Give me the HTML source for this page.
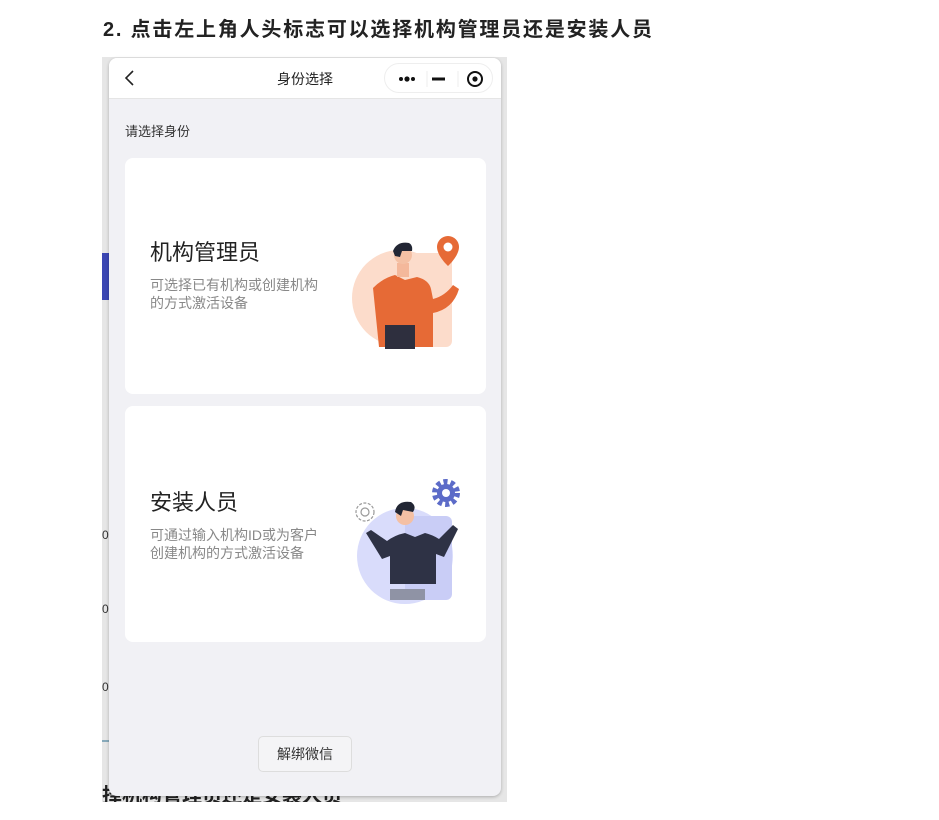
<!DOCTYPE html>
<html><head><meta charset="utf-8"><style>
*{margin:0;padding:0;box-sizing:border-box}
body{width:939px;height:820px;background:#fff;position:relative;overflow:hidden;font-family:"Liberation Sans","Noto Sans CJK SC",sans-serif}
.abs{position:absolute}
h2{position:absolute;left:103px;top:13px;font-size:20px;font-weight:bold;color:#222;letter-spacing:1.8px}
.under{left:102px;top:57px;width:405px;height:745px;background:#e6e6e6}
.phone{left:109px;top:58px;width:392px;height:738px;background:#f1f1f5;border-radius:8px;overflow:hidden;box-shadow:0 1px 3px rgba(0,0,0,.25)}
.nav{position:absolute;left:0;top:0;width:392px;height:41px;background:#fff;border-bottom:1px solid #e5e5e5}
.card{position:absolute;left:16px;width:361px;height:236px;background:#fff;border-radius:8px}
.t{position:absolute;left:25px;font-size:22px;color:#222}
.d{position:absolute;left:25px;font-size:14px;color:#888;line-height:18px}
</style></head><body>
<h2>2. 点击左上角人头标志可以选择机构管理员还是安装人员</h2>
<div class="abs under"></div>
<div class="abs" style="left:102px;top:253px;width:7px;height:47px;background:#3b46b3"></div>
<div class="abs" style="left:102px;top:740px;width:7px;height:2px;background:#8ab"></div>
<div class="abs" style="left:102px;top:528px;font-size:12px;color:#333">0</div>
<div class="abs" style="left:102px;top:602px;font-size:12px;color:#333">0</div>
<div class="abs" style="left:102px;top:680px;font-size:12px;color:#333">0</div>
<div class="abs" style="left:102px;top:783px;font-size:20px;font-weight:bold;color:#222;height:19px;overflow:hidden;line-height:26px">择机构管理员还是安装人员</div>
<div class="abs phone">
 <div class="nav">
  <svg class="abs" style="left:14px;top:11px" width="12" height="18"><path d="M10 2L3 9l7 7" stroke="#222" stroke-width="1.6" fill="none"/></svg>
  <div class="abs" style="left:0;width:392px;top:11px;text-align:center;font-size:14px;color:#222">身份选择</div>
  <div class="abs" style="left:275px;top:5px;width:109px;height:30px;border:1px solid #eee;border-radius:15px;background:#fff">
   <svg width="109" height="30"><circle cx="16" cy="15" r="2" fill="#111"/><circle cx="22" cy="15" r="2.6" fill="#111"/><circle cx="28" cy="15" r="2" fill="#111"/><line x1="42" y1="7" x2="42" y2="23" stroke="#eee"/><rect x="47" y="13.5" width="13" height="3" fill="#111"/><line x1="73" y1="7" x2="73" y2="23" stroke="#eee"/><circle cx="90" cy="15" r="7" stroke="#111" stroke-width="2" fill="none"/><circle cx="90" cy="15" r="2.6" fill="#111"/></svg>
  </div>
 </div>
 <div class="abs" style="left:16px;top:63px;font-size:13px;color:#333">请选择身份</div>
 <div class="card" style="top:100px">
  <div class="t" style="top:77px">机构管理员</div>
  <div class="d" style="top:118px">可选择已有机构或创建机构<br>的方式激活设备</div>
  <svg class="abs" style="left:220px;top:75px" width="130" height="120">
   <circle cx="55" cy="65" r="48" fill="#fcdccb"/>
   <rect x="50" y="20" width="57" height="94" fill="#fcdccb" rx="6"/>
   <path d="M28 55q10-10 22-13l10 5 12-3q12 3 14 12l2 10q12-3 20-14l6 4q-6 20-26 24v34H34z" fill="#e66a36"/>
   <path d="M40 92v24h30v-24z" fill="#2e2f3e"/>
   <rect x="52" y="30" width="12" height="14" fill="#f4b89b"/>
   <circle cx="58" cy="22" r="9" fill="#f4c0a4"/>
   <path d="M48 18q4-10 16-8q4 2 3 8h-10l-2 6-5-1z" fill="#222634"/>
   <path d="M103 3a11 11 0 0 1 11 11c0 9-11 19-11 19s-11-10-11-19a11 11 0 0 1 11-11z" fill="#e66a36"/><circle cx="103" cy="14" r="4.5" fill="#fff"/>
  </svg>
 </div>
 <div class="card" style="top:348px">
  <div class="t" style="top:79px">安装人员</div>
  <div class="d" style="top:120px">可通过输入机构ID或为客户<br>创建机构的方式激活设备</div>
  <svg class="abs" style="left:210px;top:70px" width="140" height="130">
   <circle cx="70" cy="80" r="48" fill="#d9dcfb"/>
   <rect x="70" y="40" width="47" height="84" rx="6" fill="#c9cdf6"/>
   <path d="M52 65q8-6 18-8l10 4 10-4q8 2 14 6l14-14 5 4-14 28-8-3v30H55V80l-8 3-16-26 5-3z" fill="#2e3245"/>
   <path d="M55 113h35v11H55z" fill="#8f93a5"/>
   <circle cx="70" cy="40" r="9" fill="#f4c0a4"/>
   <path d="M60 36q2-12 16-10q6 4 2 10l-10-2-2 6z" fill="#222634"/>
   <g transform="translate(111 17)"><circle r="11" fill="none" stroke="#5c6bc8" stroke-width="6" stroke-dasharray="4 3"/><circle r="9" fill="#5c6bc8"/><circle r="4" fill="#fff"/></g>
   <g transform="translate(30 36)"><circle r="9" fill="none" stroke="#999" stroke-width="1.2" stroke-dasharray="3 1.5"/><circle r="4" fill="none" stroke="#999" stroke-width="1.2"/></g>
  </svg>
 </div>
 <div class="abs" style="left:149px;top:678px;width:94px;height:36px;border:1px solid #ddd;border-radius:5px;background:#f4f4f6;text-align:center;line-height:34px;font-size:14px;color:#333">解绑微信</div>
</div>
</body></html>
